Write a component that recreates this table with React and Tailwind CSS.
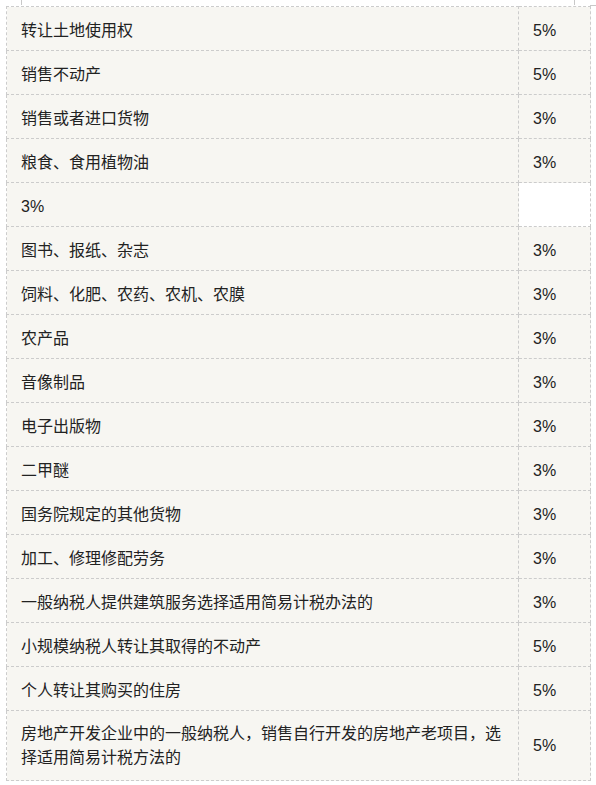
import React from 'react';

// 税率表 rows: [item, rate]
const rows = [
    ['转让土地使用权', '5%'],
    ['销售不动产', '5%'],
    ['销售或者进口货物', '3%'],
    ['粮食、食用植物油', '3%'],
    ['3%', null],
    ['图书、报纸、杂志', '3%'],
    ['饲料、化肥、农药、农机、农膜', '3%'],
    ['农产品', '3%'],
    ['音像制品', '3%'],
    ['电子出版物', '3%'],
    ['二甲醚', '3%'],
    ['国务院规定的其他货物', '3%'],
    ['加工、修理修配劳务', '3%'],
    ['一般纳税人提供建筑服务选择适用简易计税办法的', '3%'],
    ['小规模纳税人转让其取得的不动产', '5%'],
    ['个人转让其购买的住房', '5%'],
    ['房地产开发企业中的一般纳税人，销售自行开发的房地产老项目，选择适用简易计税方法的', '5%'],
];

const App = () => {
    return (
        <div
            className="min-h-[785px] bg-white text-[#222]"
            style={{ fontFamily: '"Liberation Sans", "Noto Sans CJK SC", sans-serif' }}
        >
            {/* leftover frame from the block above */}
            <div className="flex h-[6px]">
                <div className="w-[21px]" />
                <div className="h-[5px] w-px bg-[#c8c8c8]" />
                <div className="w-[552px]" />
                <div className="h-[5px] w-px bg-[#c8c8c8]" />
                <div className="w-[15px]" />
                <div className="h-[6px] flex-1 border-b border-[#c8c8c8]" />
            </div>

            <table className="ml-[6px] w-[585px] table-fixed border-collapse text-[16px] leading-[24px]">
                <colgroup>
                    <col className="w-[512px]" />
                    <col />
                </colgroup>
                <tbody>
                    {rows.map(([item, rate], i) => {
                        // the long last row wraps to two lines and gets even padding
                        const pad = i === rows.length - 1 ? 'pt-[11px] pb-[10px]' : 'pt-[10px] pb-[6px]';
                        return (
                            <tr key={i} className="h-[44px]">
                                <td className={`border border-dashed border-[#cccccc] bg-[#f7f6f2] px-[14px] align-middle ${pad}`}>
                                    {item}
                                </td>
                                <td
                                    className={`border border-dashed border-[#cccccc] px-[14px] align-middle ${pad} ${
                                        rate ? 'bg-[#f7f6f2]' : 'bg-white'
                                    }`}
                                >
                                    {rate}
                                </td>
                            </tr>
                        );
                    })}
                </tbody>
            </table>
        </div>
    );
};

export default App;
